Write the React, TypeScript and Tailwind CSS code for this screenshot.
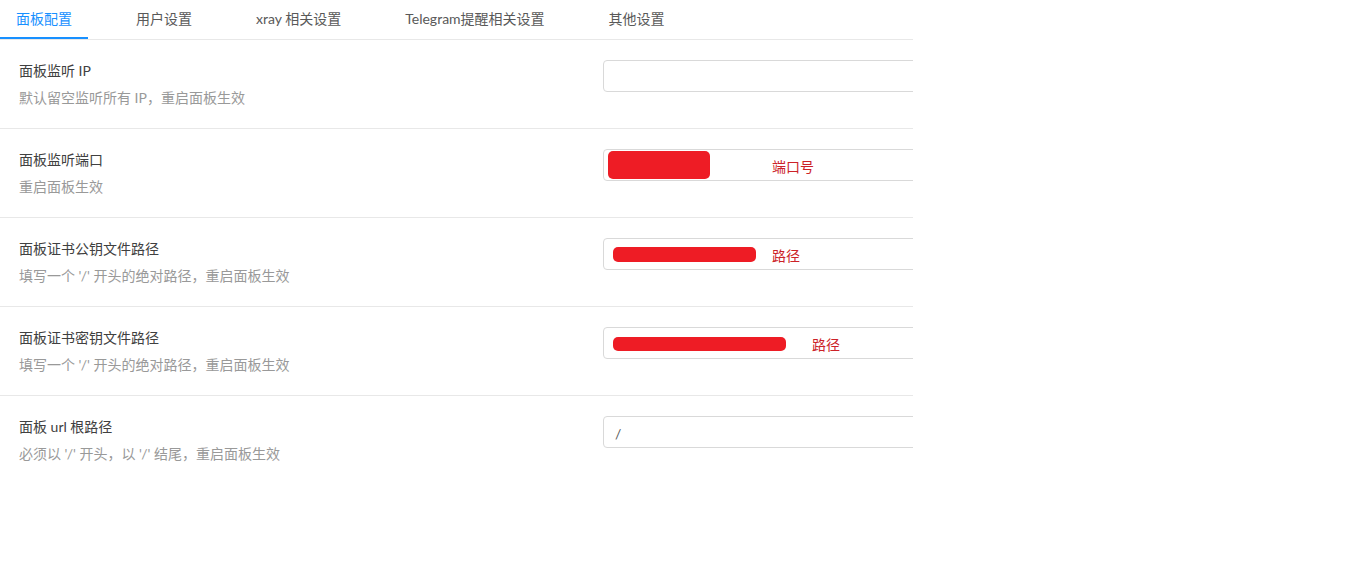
import React from 'react';

interface Mark {
    left: number;
    top: number;
    width: number;
    height: number;
    label: string;
    labelLeft: number;
}

interface SettingRow {
    title: string;
    desc: string;
    value?: string;
    mark?: Mark;
}

const tabs = ['面板配置', '用户设置', 'xray 相关设置', 'Telegram提醒相关设置', '其他设置'];

const rows: SettingRow[] = [
    { title: '面板监听 IP', desc: '默认留空监听所有 IP，重启面板生效' },
    {
        title: '面板监听端口',
        desc: '重启面板生效',
        mark: { left: 4, top: 1, width: 102, height: 28, label: '端口号', labelLeft: 168 },
    },
    {
        title: '面板证书公钥文件路径',
        desc: '填写一个 \'/\' 开头的绝对路径，重启面板生效',
        mark: { left: 9, top: 8, width: 143, height: 15, label: '路径', labelLeft: 168 },
    },
    {
        title: '面板证书密钥文件路径',
        desc: '填写一个 \'/\' 开头的绝对路径，重启面板生效',
        mark: { left: 9, top: 9, width: 173, height: 14, label: '路径', labelLeft: 208 },
    },
    { title: '面板 url 根路径', desc: '必须以 \'/\' 开头，以 \'/\' 结尾，重启面板生效', value: '/' },
];

const App: React.FC = () => {
    return (
        <div className="w-[1356px] h-[567px] bg-white font-['Lato','Noto_Sans_CJK_SC',sans-serif] text-[14px]">
            <div className="w-[913px] overflow-hidden">
                {/* tabs */}
                <div className="flex flex-row h-[40px] border-b border-[#e8e8e8]">
                    {tabs.map((tab, index) => (
                        <div
                            key={index}
                            className={
                                index === 0
                                    ? 'px-[16px] mr-[32px] leading-[38px] text-[#1890ff] border-b-2 border-[#1890ff] whitespace-nowrap'
                                    : 'px-[16px] mr-[32px] leading-[38px] text-[#595959] whitespace-nowrap'
                            }
                        >
                            {tab}
                        </div>
                    ))}
                </div>

                {/* settings list */}
                {rows.map((row, index) => (
                    <div
                        key={index}
                        className={
                            index < rows.length - 1
                                ? 'flex flex-row h-[89px] border-b border-[#e8e8e8]'
                                : 'flex flex-row h-[89px]'
                        }
                    >
                        <div className="w-[603px] shrink-0 pl-[19px] pt-[20px]">
                            <p className="leading-[22px] text-[#404040]">{row.title}</p>
                            <p className="mt-[5px] leading-[22px] text-[#999999]">{row.desc}</p>
                        </div>
                        <div className="pt-[20px]">
                            <div className="relative w-[600px] h-[32px] border border-[#d9d9d9] rounded-[4px] px-[11px] pt-[3px] leading-[28px] text-[#595959]">
                                {row.value}
                                {row.mark && (
                                    <>
                                        <div
                                            className="absolute bg-[#ee1c25] rounded-[5px]"
                                            style={{
                                                left: row.mark.left,
                                                top: row.mark.top,
                                                width: row.mark.width,
                                                height: row.mark.height,
                                            }}
                                        />
                                        <span
                                            className="absolute top-[3px] leading-[28px] text-[#cc2228]"
                                            style={{ left: row.mark.labelLeft }}
                                        >
                                            {row.mark.label}
                                        </span>
                                    </>
                                )}
                            </div>
                        </div>
                    </div>
                ))}
            </div>
        </div>
    );
};

export default App;
